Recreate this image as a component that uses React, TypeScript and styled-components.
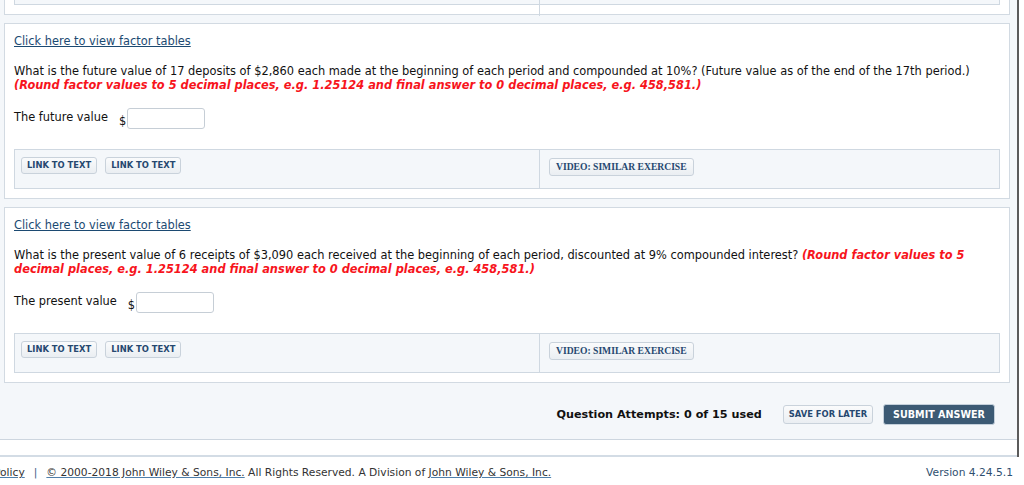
import styled, { createGlobalStyle } from 'styled-components'

const GlobalStyle = createGlobalStyle`
  html, body {
    margin: 0;
    padding: 0;
    background: #ffffff;
    overflow: hidden;
  }
  body {
    font-family: 'DejaVu Sans', Verdana, sans-serif;
    font-size: 11.4px;
    color: #111;
  }
`

const Page = styled.div`
  width: 1017px;
  background: #f4f7fa;
  border-right: 2px solid #5b5b5b;
`

const Card = styled.div<{ $partial?: boolean }>`
  margin: ${(p) => (p.$partial ? '0' : '7px')} 7px 0 4px;
  background: #ffffff;
  border: 1px solid #d2dae2;
  border-top: ${(p) => (p.$partial ? 'none' : '1px solid #d2dae2')};
  padding: ${(p) => (p.$partial ? '0' : '10px')} 9px 9px 9px;
  & + & {
    margin-top: 8px;
  }
`

const FactorLink = styled.a`
  display: block;
  line-height: 14px;
  color: #1c4a72;
  text-decoration: underline;
  cursor: pointer;
`

const Question = styled.p`
  margin: 16px 0 0;
  line-height: 14px;
`

const Hint = styled.em`
  color: #f7141c;
  font-weight: bold;
`

const AnswerRow = styled.div`
  display: flex;
  align-items: flex-start;
  margin-top: 16px;
`

const Label = styled.span`
  margin-top: 2px;
  line-height: 14px;
  margin-right: 11px;
`

const Dollar = styled.span`
  align-self: flex-end;
  line-height: 14px;
  margin-bottom: 1px;
  margin-right: 1px;
`

const Input = styled.input`
  box-sizing: border-box;
  width: 78px;
  height: 21px;
  margin: 0;
  border: 1px solid #c6ced6;
  border-radius: 3px;
  background: #fff;
`

const Panel = styled.div<{ $partial?: boolean }>`
  display: grid;
  grid-template-columns: 524px 1fr;
  margin-top: ${(p) => (p.$partial ? '0' : '20px')};
  height: ${(p) => (p.$partial ? '5px' : '40px')};
  box-sizing: border-box;
  background: #f4f7fa;
  border: 1px solid #cfd8e1;
  border-top: ${(p) => (p.$partial ? 'none' : '1px solid #cfd8e1')};
`

const PanelCell = styled.div<{ $right?: boolean }>`
  display: flex;
  align-items: flex-start;
  gap: 8px;
  padding: ${(p) => (p.$right ? '8px 9px' : '7px 6px')};
  border-left: ${(p) => (p.$right ? '1px solid #cfd8e1' : 'none')};
`

const SmallButton = styled.button<{ $serif?: boolean }>`
  height: ${(p) => (p.$serif ? '18px' : '17px')};
  padding: 0 ${(p) => (p.$serif ? '6px' : '5px')};
  margin: 0;
  border: 1px solid #c9d2db;
  border-radius: 3px;
  background: linear-gradient(#fafbfc, #eaeef2);
  color: #264870;
  font-family: ${(p) => (p.$serif ? "'Liberation Serif', 'Times New Roman', serif" : "'DejaVu Sans', Verdana, sans-serif")};
  font-weight: bold;
  font-size: ${(p) => (p.$serif ? '9.6px' : '8.4px')};
  line-height: 1;
  white-space: nowrap;
`

const ActionBar = styled.div`
  display: flex;
  justify-content: flex-end;
  align-items: center;
  box-sizing: border-box;
  height: 57px;
  padding: 6px 22px 0 0;
  border-bottom: 1px solid #cdd6df;
`

const Attempts = styled.span`
  font-weight: bold;
  font-size: 11.2px;
  margin-right: 21px;
`

const SaveButton = styled.button`
  height: 19px;
  padding: 0 5px;
  margin: 0 10px 0 0;
  border: 1px solid #c9d2db;
  border-radius: 3px;
  background: linear-gradient(#fafbfc, #eaeef2);
  color: #264870;
  font-family: 'DejaVu Sans', Verdana, sans-serif;
  font-weight: bold;
  font-size: 8.4px;
`

const SubmitButton = styled.button`
  height: 21px;
  padding: 0 9px;
  margin: 0;
  border: 1px solid #c4d0db;
  border-radius: 3px;
  background: #3c5a74;
  color: #ffffff;
  font-family: 'DejaVu Sans', Verdana, sans-serif;
  font-weight: bold;
  font-size: 9.6px;
`

const Strip = styled.div`
  height: 15px;
  background: #ffffff;
  border-bottom: 2px solid #d3dce5;
`

const Footer = styled.footer`
  display: flex;
  justify-content: space-between;
  padding: 9px 11px 0 0;
  line-height: 14px;
  font-size: 10.7px;
  color: #333;
`

const FooterText = styled.span`
  margin-left: -6px;
  white-space: nowrap;
`

const FooterLink = styled.a`
  color: #333;
  text-decoration: underline;
  text-decoration-color: #4f7fab;
`

const Separator = styled.span`
  margin: 0 9px;
  color: #3f6589;
`

const Version = styled.span`
  color: #2f4f6f;
`

interface QuestionCardProps {
  label: string
  children: any
}

const QuestionCard = ({ label, children }: QuestionCardProps) => (
  <Card>
    <FactorLink>Click here to view factor tables</FactorLink>
    <Question>{children}</Question>
    <AnswerRow>
      <Label>{label}</Label>
      <Dollar>$</Dollar>
      <Input type="text" />
    </AnswerRow>
    <Panel>
      <PanelCell>
        <SmallButton>LINK TO TEXT</SmallButton>
        <SmallButton>LINK TO TEXT</SmallButton>
      </PanelCell>
      <PanelCell $right>
        <SmallButton $serif>VIDEO: SIMILAR EXERCISE</SmallButton>
      </PanelCell>
    </Panel>
  </Card>
)

export default function App() {
  return (
    <>
      <GlobalStyle />
      <Page>
        <Card $partial>
          <Panel $partial>
            <PanelCell />
            <PanelCell $right />
          </Panel>
        </Card>
        <QuestionCard label="The future value">
          What is the future value of 17 deposits of $2,860 each made at the beginning of each period and
          compounded at 10%? (Future value as of the end of the 17th period.)
          <br />
          <Hint>
            (Round factor values to 5 decimal places, e.g. 1.25124 and final answer to 0 decimal places, e.g.
            458,581.)
          </Hint>
        </QuestionCard>
        <QuestionCard label="The present value">
          What is the present value of 6 receipts of $3,090 each received at the beginning of each period,
          discounted at 9% compounded interest?{' '}
          <Hint>
            (Round factor values to 5 decimal places, e.g. 1.25124 and final answer to 0 decimal places, e.g.
            458,581.)
          </Hint>
        </QuestionCard>
        <ActionBar>
          <Attempts>Question Attempts: 0 of 15 used</Attempts>
          <SaveButton>SAVE FOR LATER</SaveButton>
          <SubmitButton>SUBMIT ANSWER</SubmitButton>
        </ActionBar>
        <Strip />
      </Page>
      <Footer>
        <FooterText>
          <FooterLink>Policy</FooterLink>
          <Separator>|</Separator>
          <FooterLink>© 2000-2018 John Wiley &amp; Sons, Inc.</FooterLink> All Rights Reserved. A Division of{' '}
          <FooterLink>John Wiley &amp; Sons, Inc.</FooterLink>
        </FooterText>
        <Version>Version 4.24.5.1</Version>
      </Footer>
    </>
  )
}
